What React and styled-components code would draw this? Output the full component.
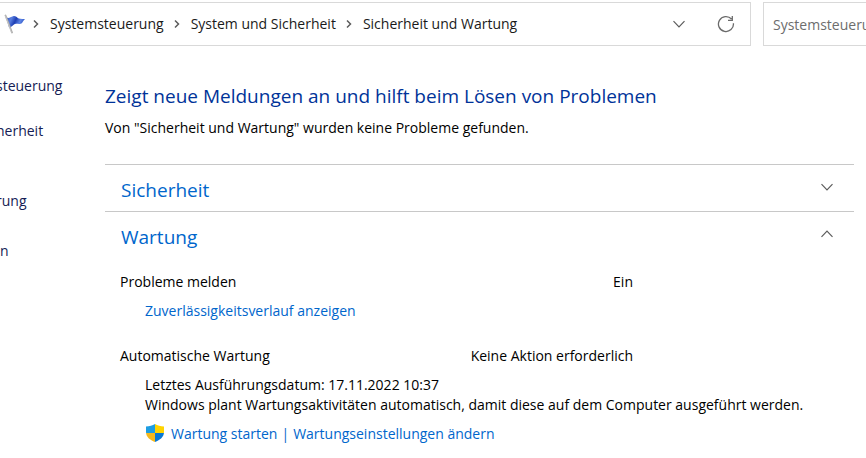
import { useState } from 'react'
import styled, { createGlobalStyle } from 'styled-components'

const breadcrumbs = ['Systemsteuerung', 'System und Sicherheit', 'Sicherheit und Wartung']

const App = () => {
  const [open, setOpen] = useState({ security: false, maintenance: true })
  const toggle = (key) => setOpen({ ...open, [key]: !open[key] })

  return (
    <>
      <GlobalStyle />
      <TopBar>
        <AddressBar>
          <FlagIcon />
          {breadcrumbs.map((crumb) => (
            <Crumb key={crumb}>
              <Chevron direction="right" />
              <CrumbLink href="#">{crumb}</CrumbLink>
            </Crumb>
          ))}
          <Actions>
            <IconButton type="button" aria-label="Vorherige Orte">
              <Chevron direction="down" />
            </IconButton>
            <IconButton type="button" aria-label="Aktualisieren">
              <RefreshIcon />
            </IconButton>
          </Actions>
        </AddressBar>
        <Search
          type="text"
          aria-label="Systemsteuerung durchsuchen"
          placeholder="Systemsteuerung durchsuchen"
        />
      </TopBar>

      <Page>
        <Sidebar>
          <NavGroup $gap="25px">
            <NavLink href="#" $cut>steuerung</NavLink>
            <NavLink href="#" $cut>herheit</NavLink>
          </NavGroup>
          <NavGroup $gap="30px">
            <NavLink href="#" $cut>rung</NavLink>
            <NavLink href="#">n</NavLink>
          </NavGroup>
        </Sidebar>

        <Main>
          <Title>Zeigt neue Meldungen an und hilft beim Lösen von Problemen</Title>
          <Intro>Von "Sicherheit und Wartung" wurden keine Probleme gefunden.</Intro>

          <Section>
            <SectionButton
              type="button"
              aria-expanded={open.security}
              onClick={() => toggle('security')}
            >
              Sicherheit
              <Chevron direction={open.security ? 'up' : 'down'} />
            </SectionButton>
          </Section>

          <Section>
            <SectionButton
              type="button"
              aria-expanded={open.maintenance}
              onClick={() => toggle('maintenance')}
            >
              Wartung
              <Chevron direction={open.maintenance ? 'up' : 'down'} />
            </SectionButton>
            {open.maintenance && (
              <SectionBody>
                <Item>
                  <StatusRow>
                    <span>Probleme melden</span>
                    <span>Ein</span>
                  </StatusRow>
                  <Details>
                    <Link href="#">Zuverlässigkeitsverlauf anzeigen</Link>
                  </Details>
                </Item>
                <Item>
                  <StatusRow>
                    <span>Automatische Wartung</span>
                    <span>Keine Aktion erforderlich</span>
                  </StatusRow>
                  <Details>
                    <p>Letztes Ausführungsdatum: 17.11.2022 10:37</p>
                    <p>
                      Windows plant Wartungsaktivitäten automatisch, damit diese auf dem Computer
                      ausgeführt werden.
                    </p>
                  </Details>
                  <LinkRow>
                    <ShieldIcon />
                    <Link href="#">Wartung starten</Link>
                    <Divider>|</Divider>
                    <Link href="#">Wartungseinstellungen ändern</Link>
                  </LinkRow>
                </Item>
              </SectionBody>
            )}
          </Section>
        </Main>
      </Page>
    </>
  )
}

export default App

const chevronPaths = {
  right: 'M4 2.5 7.5 6 4 9.5',
  down: 'M0.5 3.2 6 8.8 11.5 3.2',
  up: 'M0.5 8.8 6 3.2 11.5 8.8'
}

const Chevron = ({ direction }) => (
  <svg width="12" height="12" viewBox="0 0 12 12" fill="none" aria-hidden="true">
    <path
      d={chevronPaths[direction]}
      stroke="#5C5C5C"
      strokeWidth={direction === 'right' ? 1.5 : 1.2}
    />
  </svg>
)

const FlagIcon = () => (
  <svg width="22" height="20" viewBox="0 0 22 20" aria-hidden="true">
    <defs>
      <linearGradient id="flag" x1="0" y1="0" x2="1" y2="0.3">
        <stop offset="0" stopColor="#2A4DB8" />
        <stop offset="0.3" stopColor="#5B80E0" />
        <stop offset="0.55" stopColor="#1E3FB4" />
        <stop offset="0.8" stopColor="#5F86E6" />
        <stop offset="1" stopColor="#3159C8" />
      </linearGradient>
    </defs>
    <path
      d="M2.500 3.500C5 4.800 6.500 3 9 2.200c2-.6 3 .2 4.500 1.500 1.500 1.300 3.500 1.200 7.500 1.300-1.500 1.500-2 2.500-3 4-1.500 1.500-4 .9-6 .8-2.500 0-3.500 3.200-7 3.800z"
      fill="url(#flag)"
    />
    <path d="M1.500 1.500 8 18.500" stroke="#A9A9A9" strokeWidth="1.800" strokeLinecap="round" />
    <path d="M1.300 1.500 7.500 18.500" stroke="#D6D6D6" strokeWidth=".6" />
  </svg>
)

const RefreshIcon = () => (
  <svg width="18" height="18" viewBox="0 0 18 18" fill="none" aria-hidden="true">
    <path
      d="M16.400 8.200A7.500 7.500 0 1 1 14.500 4M15.300 1v4.300H11"
      stroke="#6A6A6A"
      strokeWidth="1.300"
    />
  </svg>
)

const ShieldIcon = () => (
  <svg width="20" height="20" viewBox="0 0 20 20" aria-hidden="true">
    <defs>
      <clipPath id="shield">
        <path d="M10 0c2.500 1.500 5.500 2.300 9 2.400V8c0 5-4 8-9 10-5-2-9-5-9-10V2.400C4.500 2.300 7.500 1.500 10 0z" />
      </clipPath>
    </defs>
    <g clipPath="url(#shield)">
      <path d="M0 0h10v9H0z" fill="#1D9DE2" />
      <path d="M10 0h10v9H10z" fill="#FFD400" />
      <path d="M0 9h10v10H0z" fill="#F5B81C" />
      <path d="M10 9h10v10H10z" fill="#0878D4" />
    </g>
  </svg>
)

const GlobalStyle = createGlobalStyle`
  * {
    box-sizing: border-box;
  }

  body {
    background-color: #FFFFFF;
    color: #000000;
    font-family: 'Open Sans', 'Noto Sans', sans-serif;
    font-size: 14px;
    line-height: 20px;
    margin: 0;
    overflow-x: hidden;
  }

  h1, p {
    margin: 0;
  }

  a {
    text-decoration: none;
  }

  button, input {
    font: inherit;
  }

  svg {
    flex: none;
  }
`

const TopBar = styled.header`
  column-gap: 12px;
  display: flex;
  padding-top: 2px;
`

const AddressBar = styled.nav`
  align-items: center;
  border: 1px solid #D9D9D9;
  border-left: none;
  display: flex;
  flex: 1;
  height: 44px;
  padding: 0 12px 0 4px;
`

const Crumb = styled.span`
  align-items: center;
  display: flex;

  svg {
    margin: 0 8px 0 7px;
  }

  &:first-of-type svg {
    margin-left: 4px;
  }
`

const CrumbLink = styled.a`
  color: #1A1A1A;
  white-space: nowrap;
`

const Actions = styled.div`
  column-gap: 23px;
  display: flex;
  margin-left: auto;
`

const IconButton = styled.button`
  align-items: center;
  background: none;
  border: none;
  display: flex;
  height: 24px;
  justify-content: center;
  padding: 0;
  width: 24px;
`

const Search = styled.input`
  background-color: #FFFFFF;
  border: 1px solid #D9D9D9;
  border-radius: 0;
  border-right: none;
  height: 44px;
  padding: 0 0 0 9px;
  width: 103px;

  &::placeholder {
    color: #6D6D6D;
  }
`

const Page = styled.div`
  display: flex;
`

const Sidebar = styled.nav`
  display: flex;
  flex: none;
  flex-direction: column;
  padding-top: 30px;
  row-gap: 50px;
  width: 105px;
`

const NavGroup = styled.div`
  display: flex;
  flex-direction: column;
  row-gap: ${({ $gap }) => $gap};
`

const NavLink = styled.a`
  color: #151C55;
  margin-left: ${({ $cut }) => ($cut ? '-4px' : '0')};
`

const Main = styled.main`
  flex: 1;
  padding: 36px 12px 12px 0;
`

const Title = styled.h1`
  color: #003399;
  font-size: 19px;
  font-weight: 400;
  line-height: 28px;
`

const Intro = styled.p`
  margin: 8px 0 26px;
`

const Section = styled.section`
  border-top: 1px solid #C8C8C8;
`

const SectionButton = styled.button`
  align-items: center;
  background: none;
  border: none;
  color: #0066CC;
  display: flex;
  font-size: 19px;
  height: 46px;
  justify-content: space-between;
  padding: 4px 21px 0 16px;
  width: 100%;

  svg {
    margin-bottom: 6px;
  }
`

const SectionBody = styled.div`
  display: flex;
  flex-direction: column;
  padding: 14px 0 0 15px;
  row-gap: 25px;
`

const Item = styled.div`
  display: flex;
  flex-direction: column;
  row-gap: 9px;
`

const StatusRow = styled.div`
  display: flex;
  justify-content: space-between;
  max-width: 513px;
`

const Details = styled.div`
  padding-left: 25px;
`

const LinkRow = styled.div`
  align-items: center;
  display: flex;
  padding-left: 25px;

  svg {
    margin-right: 6px;
  }
`

const Link = styled.a`
  color: #0066CC;
`

const Divider = styled.span`
  color: #0066CC;
  margin: 0 4px;
`
